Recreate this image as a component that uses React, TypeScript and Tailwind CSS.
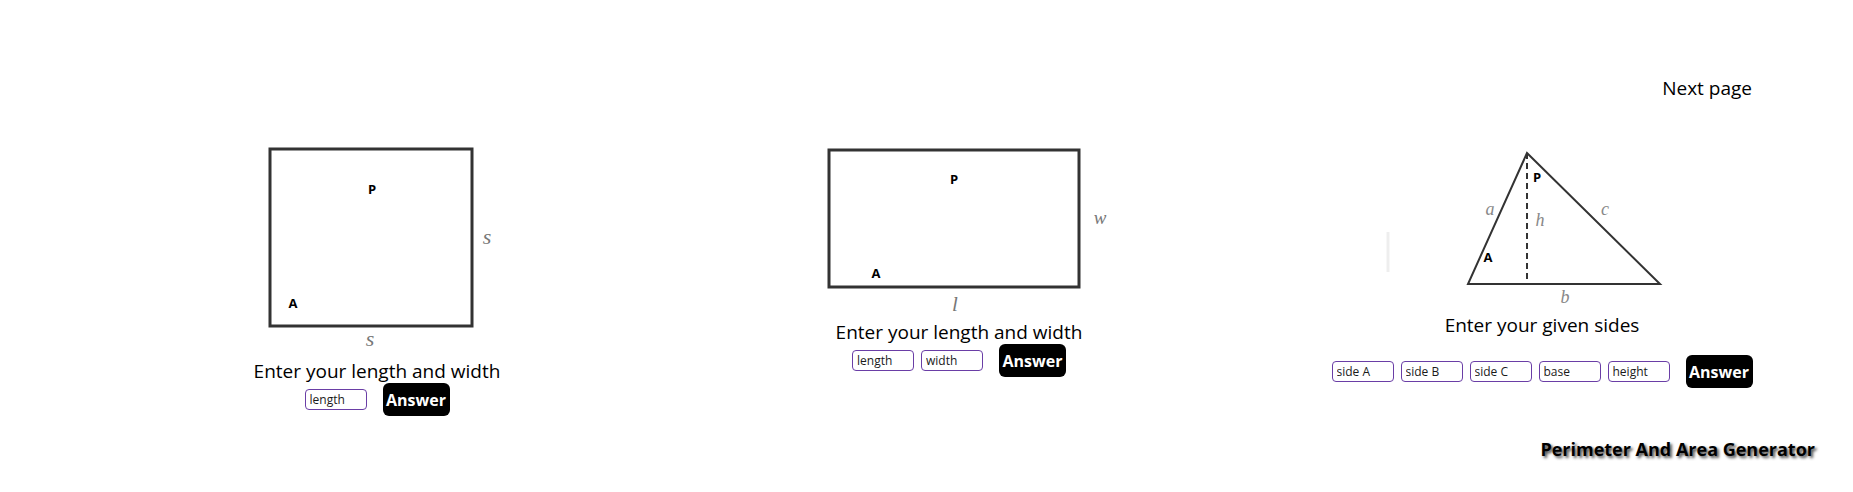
import React from "react";

const font = "font-['Trebuchet_MS','Open_Sans',sans-serif]";

function Field({ placeholder }: { placeholder: string }) {
  return (
    <input
      type="text"
      placeholder={placeholder}
      className="w-[62px] h-[21px] border border-[#6a3ea6] rounded-[4px] px-[4px] text-[12px] text-black placeholder:text-[#1a1a1a] bg-white outline-none"
    />
  );
}

// in rows that already have a 7px gap the extra margin is smaller
function AnswerButton({ inGap = false }: { inGap?: boolean }) {
  return (
    <button
      className={`${inGap ? "ml-[9px]" : "ml-[16px]"} w-[67px] h-[33px] bg-black text-white font-bold text-[16px] rounded-[6px]`}
    >
      Answer
    </button>
  );
}

function SquarePic() {
  return (
    <svg width="300" height="219" viewBox="0 0 300 219">
      <rect x="43" y="9" width="202" height="177" fill="none" stroke="#333" strokeWidth="3" />
      <text x="260" y="104" fontFamily="Liberation Serif, serif" fontStyle="italic" fontSize="22" fill="#777" textAnchor="middle">s</text>
      <text x="143" y="206" fontFamily="Liberation Serif, serif" fontStyle="italic" fontSize="22" fill="#777" textAnchor="middle">s</text>
      <text x="145" y="54" fontSize="13" fontWeight="bold" textAnchor="middle">P</text>
      <text x="66" y="168" fontSize="13" fontWeight="bold" textAnchor="middle">A</text>
    </svg>
  );
}

function RectPic() {
  return (
    <svg width="300" height="180" viewBox="0 0 300 180">
      <rect x="20" y="10" width="250" height="137" fill="none" stroke="#333" strokeWidth="3" />
      <text x="291" y="84" fontFamily="Liberation Serif, serif" fontStyle="italic" fontSize="19" fill="#777" textAnchor="middle">w</text>
      <text x="146" y="171" fontFamily="Liberation Serif, serif" fontStyle="italic" fontSize="21" fill="#777" textAnchor="middle">l</text>
      <text x="145" y="44" fontSize="13" fontWeight="bold" textAnchor="middle">P</text>
      <text x="67" y="138" fontSize="13" fontWeight="bold" textAnchor="middle">A</text>
    </svg>
  );
}

function TrianglePic() {
  return (
    <svg width="420" height="173" viewBox="0 0 420 173">
      <line x1="56" y1="92" x2="56" y2="132" stroke="#eee" strokeWidth="3" />
      <polygon points="195,13 136,144 328,144" fill="none" stroke="#333" strokeWidth="2" />
      <line x1="195" y1="13" x2="195" y2="144" stroke="#333" strokeWidth="2" strokeDasharray="6 4" />
      <text x="158" y="75" fontFamily="Liberation Serif, serif" fontStyle="italic" fontSize="18" fill="#888" textAnchor="middle">a</text>
      <text x="208" y="86" fontFamily="Liberation Serif, serif" fontStyle="italic" fontSize="18" fill="#888" textAnchor="middle">h</text>
      <text x="273" y="75" fontFamily="Liberation Serif, serif" fontStyle="italic" fontSize="18" fill="#888" textAnchor="middle">c</text>
      <text x="233" y="163" fontFamily="Liberation Serif, serif" fontStyle="italic" fontSize="18" fill="#888" textAnchor="middle">b</text>
      <text x="205" y="42" fontSize="13" fontWeight="bold" textAnchor="middle">P</text>
      <text x="156" y="122" fontSize="13" fontWeight="bold" textAnchor="middle">A</text>
    </svg>
  );
}

export default function App() {
  return (
    <div className={`w-[1853px] h-[492px] bg-white text-black ${font}`}>
      <div className="flex justify-end pr-[101px] pt-[76px] h-[140px]">
        <a className="text-[19px] leading-6 cursor-pointer">Next page</a>
      </div>

      <div className="flex items-start">
        <div className="ml-[227px] w-[300px] flex flex-col items-center">
          <SquarePic />
          <p className="text-[19px] leading-6">Enter your length and width</p>
          <div className="flex items-center">
            <Field placeholder="length" />
            <AnswerButton />
          </div>
        </div>

        <div className="ml-[282px] w-[300px] flex flex-col items-center">
          <RectPic />
          <p className="text-[19px] leading-6">Enter your length and width</p>
          <div className="flex items-center gap-[7px]">
            <Field placeholder="length" />
            <Field placeholder="width" />
            <AnswerButton inGap />
          </div>
        </div>

        <div className="ml-[223px] w-[420px] flex flex-col items-center">
          <TrianglePic />
          <p className="text-[19px] leading-6">Enter your given sides</p>
          <div className="mt-[18px] flex items-center gap-[7px]">
            <Field placeholder="side A" />
            <Field placeholder="side B" />
            <Field placeholder="side C" />
            <Field placeholder="base" />
            <Field placeholder="height" />
            <AnswerButton inGap />
          </div>
        </div>
      </div>

      <div className="flex justify-end pr-[38px] mt-[21px]">
        <h1 className="text-[18px] leading-6 font-bold [text-shadow:2px_2px_3px_#444]">
          Perimeter And Area Generator
        </h1>
      </div>
    </div>
  );
}
